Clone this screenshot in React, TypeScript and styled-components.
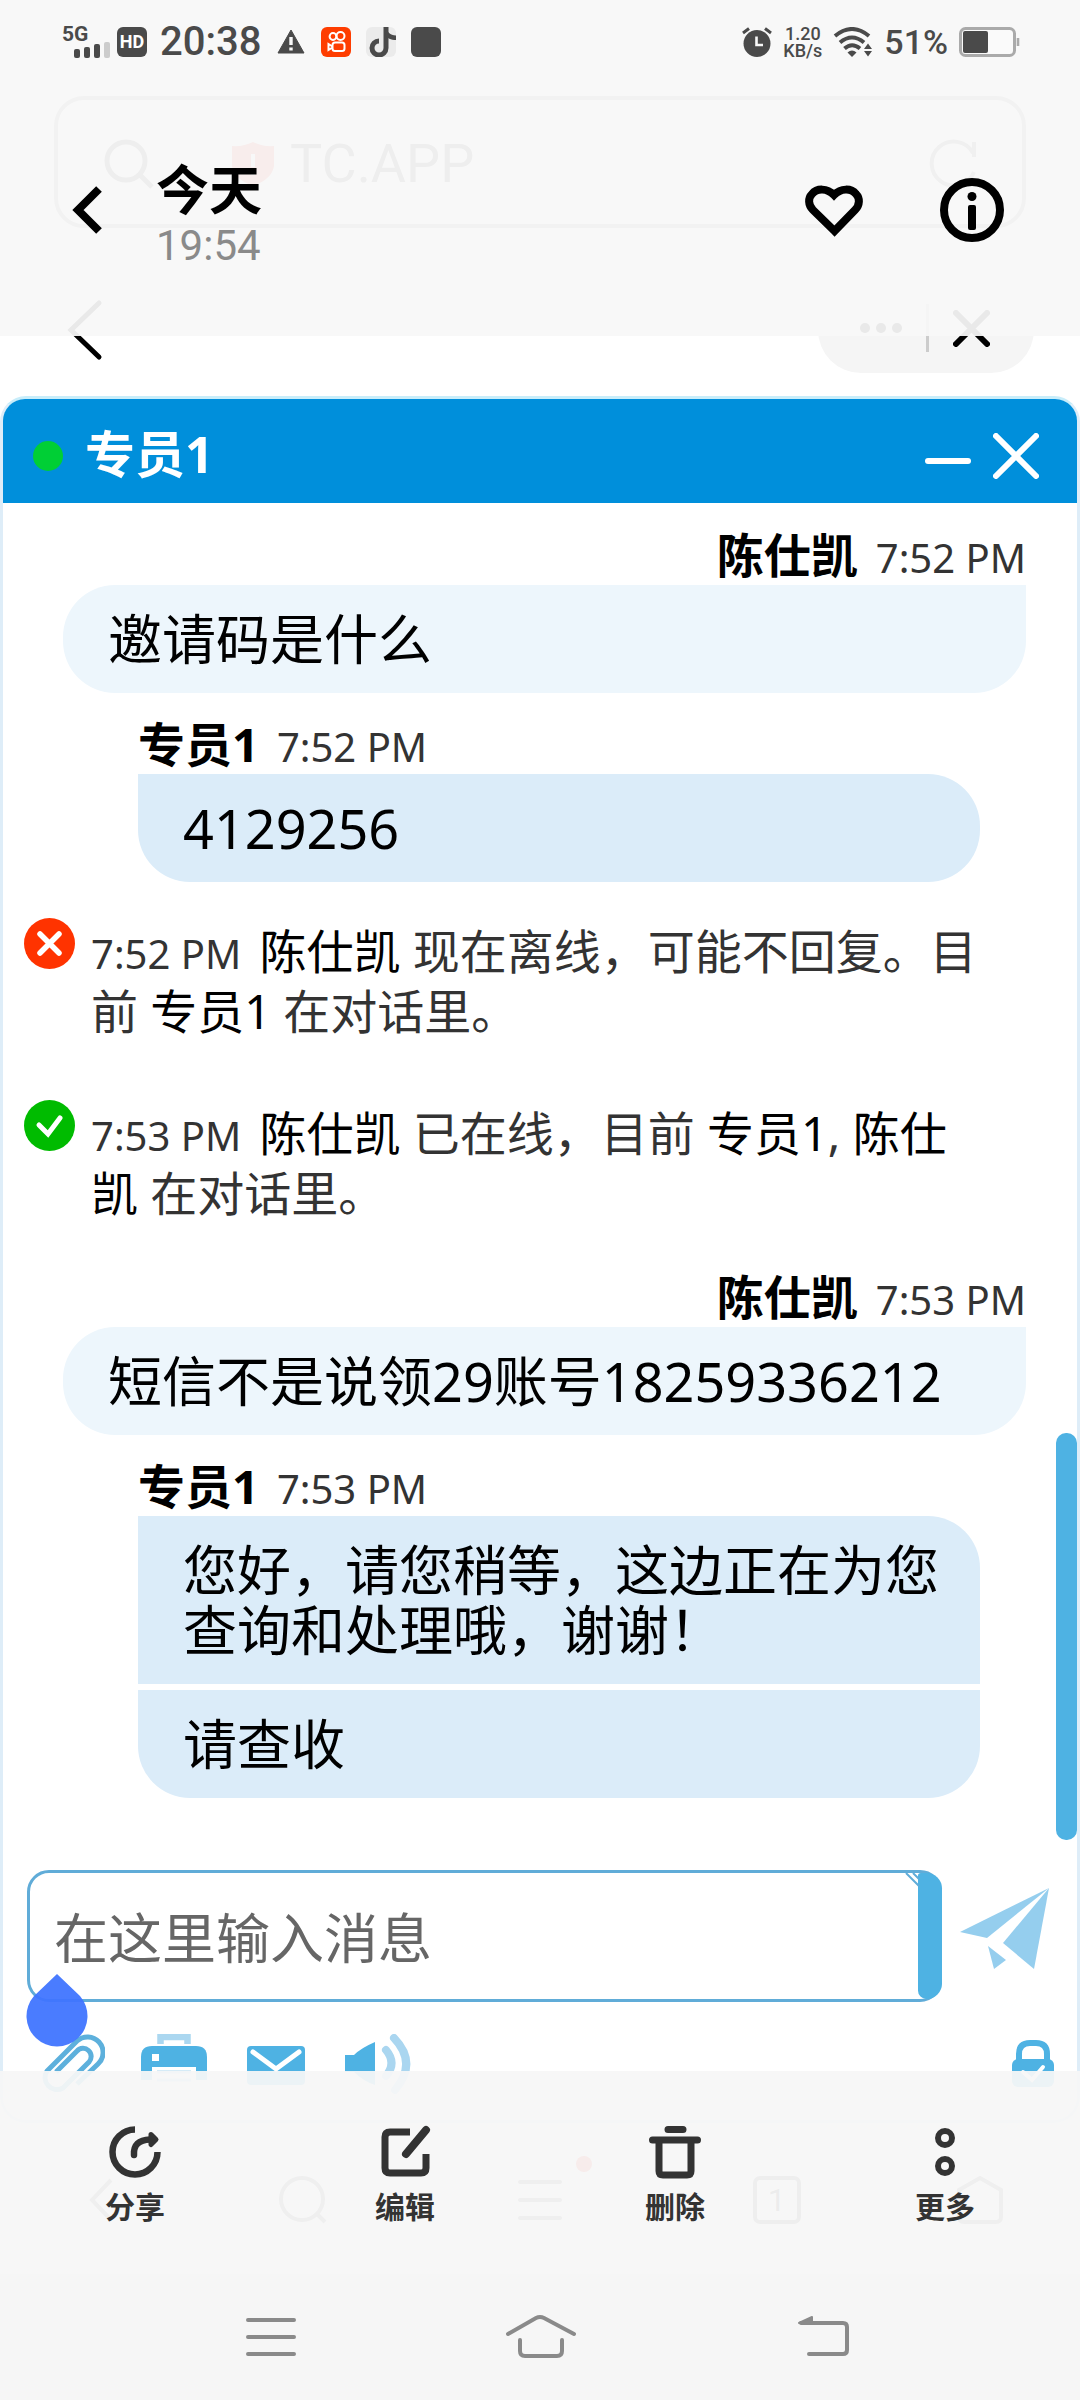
import React from "react";
import styled, { createGlobalStyle, css } from "styled-components";

const SKY = "#4eb2e3";
const INK = "#4a4a4a";
const UI_FONT = `Roboto, "Noto Sans CJK SC", sans-serif`;
const CHAT_FONT = `"Noto Sans", "Noto Sans CJK SC", sans-serif`;

const GlobalStyle = createGlobalStyle`
  *, *::before, *::after { box-sizing: border-box; }
  body { margin: 0; background: #fff; font-family: ${UI_FONT}; }
  button { border: 0; padding: 0; background: none; font: inherit; color: inherit; display: block; cursor: pointer; }
  svg { display: block; }
  p, h1, h2 { margin: 0; }
`;

const Viewer = styled.div`
  position: relative;
  min-height: 100vh;
  overflow: hidden;
`;

/* ---------- photo being viewed ---------- */

const Photo = styled.main`
  display: flex;
  flex-direction: column;
  padding-top: 96px;
`;

const AddressBar = styled.div`
  display: flex;
  align-items: center;
  height: 132px;
  margin: 0 54px;
  padding: 4px 44px 0 46px;
  border: 4px solid #999;
  border-radius: 30px;
  color: #555;
`;

const AddressText = styled.span`
  flex: 1;
  margin-left: 16px;
  font-size: 54px;
  line-height: 60px;
`;

const Shield = styled.svg`
  margin-left: 78px;
`;

const MiniBar = styled.div`
  display: flex;
  align-items: center;
  justify-content: space-between;
  height: 86px;
  margin: 59px 46px 0 64px;
`;

const Capsule = styled.div`
  display: flex;
  align-items: center;
  justify-content: space-between;
  width: 216px;
  height: 86px;
  padding: 0 44px 4px 42px;
  border-radius: 43px;
  background: #f5f5f5;
`;

const CapsuleRule = styled.span`
  width: 3px;
  height: 48px;
  background: #ccc;
`;

const ChatWindow = styled.section`
  margin-top: 23px;
  border: 3px solid #deedf8;
  border-top-color: #c8edfa;
  border-radius: 26px;
  font-family: ${CHAT_FONT};
`;

const ChatHeader = styled.header`
  display: flex;
  align-items: center;
  height: 104px;
  padding: 10px 38px 0 30px;
  border-radius: 22px 22px 0 0;
  background: #008fdb;
  color: #fff;
`;

const OnlineDot = styled.span`
  width: 30px;
  height: 30px;
  margin-right: 22px;
  border-radius: 50%;
  background: #00cf35;
`;

const ChatTitle = styled.h2`
  flex: 1;
  padding-bottom: 4px;
  font-size: 50px;
  line-height: 60px;
  font-weight: 700;
`;

const HeaderButtons = styled.div`
  display: flex;
  gap: 22px;
`;

const Log = styled.div`
  display: flex;
  padding-top: 22px;
`;

const Messages = styled.div`
  flex: 1;
  min-width: 0;
  padding: 0 30px 42px 21px;
`;

const ScrollTrack = styled.div`
  display: flex;
  flex-direction: column;
  justify-content: flex-end;
  width: 21px;
`;

const ScrollThumb = styled.div`
  height: 407px;
  border-radius: 10px;
  background: ${SKY};
`;

const Group = styled.article<{ $mine?: boolean }>`
  display: flex;
  flex-direction: column;
  gap: 6px;
  ${(p) => (p.$mine ? css`margin: 0 0 21px 39px;` : css`margin: 0 46px 0 114px;`)}
`;

const Byline = styled.div<{ $mine?: boolean }>`
  display: flex;
  align-items: baseline;
  justify-content: ${(p) => (p.$mine ? "flex-end" : "flex-start")};
  gap: 18px;
  height: 60px;
  margin-bottom: -6px;
  line-height: 60px;
`;

const Name = styled.strong`
  font-size: 47px;
  font-weight: 700;
  color: #000;
`;

const Time = styled.time`
  font-size: 40px;
  color: #333;
`;

const Bubble = styled.p<{ $mine?: boolean }>`
  padding: 24px 34px 24px 45px;
  font-size: 54px;
  line-height: 60px;
  color: #000;
  background: ${(p) => (p.$mine ? "#edf6fc" : "#dbecf9")};
  ${(p) =>
    p.$mine
      ? css`border-radius: 52px 0 52px 52px;`
      : css`
          &:nth-of-type(1) { border-top-right-radius: 52px; }
          &:last-of-type { border-bottom-left-radius: 52px; border-bottom-right-radius: 52px; }
        `}
`;

const Notice = styled.div<{ $last?: boolean }>`
  display: flex;
  gap: 16px;
  padding-right: 42px;
  margin-bottom: ${(p) => (p.$last ? 44 : 62)}px;
`;

const Notices = styled.div`
  padding-top: 39px;
`;

const NoticeIcon = styled.svg`
  flex: none;
  margin-top: -3px;
`;

const NoticeText = styled.p`
  font-size: 47px;
  line-height: 60px;
  color: #333;
  ${Time} {
    margin-right: 6px;
    line-height: 40px;
  }
`;

const Who = styled.span`
  color: #000;
`;

const Composer = styled.form`
  display: flex;
  align-items: center;
  gap: 18px;
  padding: 30px 27px 0 24px;
`;

const Field = styled.div`
  position: relative;
  display: flex;
  flex: 1;
  height: 132px;
  border: 3px solid #60acd8;
  border-radius: 22px;
`;

const Input = styled.input`
  flex: 1;
  min-width: 0;
  padding: 4px 24px 0;
  border: 0;
  outline: 0;
  background: none;
  font-family: ${CHAT_FONT};
  font-size: 54px;
  &::placeholder { color: #666; opacity: 1; }
`;

const FieldBar = styled.span`
  width: 24px;
  margin-right: -3px;
  border-radius: 4px 22px 22px 12px;
  background: ${SKY};
`;

const Grip = styled.svg`
  position: absolute;
  top: 0;
  right: 20px;
`;

const CursorHandle = styled.svg`
  position: absolute;
  left: -4px;
  top: 101px;
`;

const SendButton = styled.button`
  padding-bottom: 16px;
`;

const Tools = styled.div`
  display: flex;
  gap: 36px;
  padding: 32px 23px 26px 36px;
  & > :last-child { margin-left: auto; }
`;

const BrowserBar = styled.nav`
  display: grid;
  grid-template-columns: 169px 1fr 1fr 1fr 169px;
  justify-items: center;
  align-items: center;
  height: 100px;
  margin-top: 27px;
  padding: 0 16px;
`;

const MenuButton = styled.button`
  position: relative;
`;

const RedDot = styled.span`
  position: absolute;
  top: -24px;
  right: -30px;
  width: 16px;
  height: 16px;
  border-radius: 50%;
  background: #ff4030;
`;

const TabCount = styled.button`
  width: 48px;
  height: 48px;
  border: 4px solid #666;
  border-radius: 7px;
  font-size: 32px;
  line-height: 40px;
  color: #444;
`;

/* ---------- viewer chrome laid over the photo ---------- */

const TopChrome = styled.header`
  position: absolute;
  inset: 0 0 auto;
  height: 336px;
  background: rgba(248, 248, 248, 0.94);
`;

const StatusBar = styled.div`
  display: flex;
  align-items: center;
  justify-content: space-between;
  height: 84px;
  padding: 0 60px 0 62px;
  color: ${INK};
`;

const StatusSide = styled.div<{ $gap: number }>`
  display: flex;
  align-items: center;
  gap: ${(p) => p.$gap}px;
`;

const Signal = styled.div`
  display: flex;
  flex-direction: column;
  width: 48px;
  font-size: 21px;
  line-height: 15px;
  font-weight: 700;
`;

const Bars = styled.div`
  display: flex;
  align-items: flex-end;
  justify-content: flex-end;
  gap: 4px;
`;

const Bar = styled.span<{ $h: number; $dim?: boolean }>`
  width: 6px;
  height: ${(p) => p.$h}px;
  border-radius: 2px;
  background: ${(p) => (p.$dim ? "#ccc" : INK)};
`;

const Badge = styled.span`
  width: 30px;
  height: 30px;
  margin: 0 -2px 0 -8px;
  border-radius: 6px;
  background: ${INK};
  color: #fff;
  font-size: 18px;
  line-height: 30px;
  font-weight: 700;
  text-align: center;
`;

const Clock = styled.span`
  font-size: 40px;
  line-height: 44px;
  font-weight: 500;
`;

const Speed = styled.span`
  display: flex;
  flex-direction: column;
  align-items: center;
  font-size: 18px;
  line-height: 17px;
  font-weight: 500;
`;

const Percent = styled.span`
  font-size: 34px;
  line-height: 40px;
  font-weight: 500;
`;

const TitleBar = styled.div`
  display: flex;
  align-items: center;
  height: 252px;
  padding: 0 76px 0 72px;
`;

const TitleText = styled.div`
  flex: 1;
  margin-left: 54px;
  padding-top: 12px;
`;

const Title = styled.h1`
  font-size: 53px;
  line-height: 60px;
  font-weight: 700;
  color: #000;
`;

const Subtitle = styled.p`
  font-size: 42px;
  line-height: 48px;
  color: #8a8a8a;
`;

const TitleActions = styled.div`
  display: flex;
  gap: 74px;
`;

const BottomChrome = styled.footer`
  position: absolute;
  inset: auto 0 0;
`;

const ActionBar = styled.div`
  display: grid;
  grid-template-columns: repeat(4, 1fr);
  justify-items: center;
  align-items: start;
  height: 203px;
  padding-top: 54px;
  background: rgba(247, 247, 247, 0.94);
`;

const Action = styled.button`
  display: flex;
  flex-direction: column;
  align-items: center;
  gap: 9px;
  font-size: 30px;
  line-height: 40px;
  font-weight: 700;
  color: #333;
`;

const SystemNav = styled.nav`
  display: grid;
  grid-template-columns: repeat(3, 1fr);
  justify-items: center;
  align-items: center;
  height: 126px;
  padding: 0 135px;
  background: #f6f6f6;
`;

function StatusIcons() {
  return (
    <StatusBar>
      <StatusSide $gap={15}>
        <Signal>
          <span>5G</span>
          <Bars>
            <Bar $h={9} />
            <Bar $h={11} />
            <Bar $h={14} />
            <Bar $h={16} $dim />
          </Bars>
        </Signal>
        <Badge>HD</Badge>
        <Clock>20:38</Clock>
        <svg width="30" height="30" viewBox="0 0 30 30">
          <path d="M15 3 L28 26 H2 Z" fill={INK} stroke={INK} strokeWidth="1" strokeLinejoin="round" />
          <path d="M15 10 V18 M15 20.5 V23.5" stroke="#f8f8f8" strokeWidth="3.4" />
        </svg>
        <svg width="30" height="30" viewBox="0 0 30 30">
          <rect width="30" height="30" rx="6" fill="#fe3d00" />
          <g fill="none" stroke="#fff" strokeWidth="2">
            <circle cx="12" cy="9.5" r="3.4" />
            <circle cx="19.5" cy="9" r="4" />
            <rect x="11.5" y="15.5" width="12" height="8.5" rx="2.5" />
            <path d="M11.5 19.5 L7.5 17 V23 L11.5 20.5" />
          </g>
        </svg>
        <svg width="30" height="30" viewBox="0 0 30 30">
          <rect width="30" height="30" rx="6" fill="#ebebeb" />
          <path d="M20 0 V21 A7 7 0 1 1 13 14" fill="none" stroke={INK} strokeWidth="5" />
          <path d="M20 0 C21 5 24 8 30 8.5 V13 C25 13 21 11 19 8 Z" fill={INK} />
        </svg>
        <svg width="30" height="30" viewBox="0 0 30 30">
          <rect width="30" height="30" rx="6" fill={INK} />
        </svg>
      </StatusSide>
      <StatusSide $gap={11}>
        <svg width="30" height="30" viewBox="0 0 30 30">
          <circle cx="15" cy="16.5" r="13.5" fill={INK} />
          <path d="M1 6 L7 1.5 M29 6 L23 1.5" stroke={INK} strokeWidth="3" />
          <path d="M14.5 9.5 V18 H21" fill="none" stroke="#f8f8f8" strokeWidth="2.6" />
        </svg>
        <Speed>
          <span>1.20</span>
          <span>KB/s</span>
        </Speed>
        <svg width="40" height="30" viewBox="0 0 40 30">
          <g fill="none" stroke={INK} strokeWidth="4">
            <path d="M2 9 Q19 -5 36 9" />
            <path d="M7 15.5 Q19 5.5 31 15.5" />
            <path d="M11.5 21.5 Q19 15 27 21.5" />
          </g>
          <path d="M14.5 25.5 Q19 21.5 23.5 25.5 L19 30 Z" fill={INK} />
          <path d="M31 22 L35 16.5 L39 22 Z M31 24 L35 29.5 L39 24 Z" fill={INK} />
        </svg>
        <Percent>51%</Percent>
        <svg width="61" height="30" viewBox="0 0 61 30">
          <rect x="1.5" y="1.5" width="54" height="27" rx="5" fill="#fafafa" stroke="#aaa" strokeWidth="3" />
          <rect x="4" y="4" width="25" height="22" rx="2" fill={INK} />
          <path d="M59 11 V19" stroke="#aaa" strokeWidth="2.6" />
        </svg>
      </StatusSide>
    </StatusBar>
  );
}

function Cross({ size, width, color }: { size: number; width: number; color: string }) {
  const a = width / 2;
  const b = size - a;
  return (
    <svg width={size} height={size} viewBox={`0 0 ${size} ${size}`}>
      <path d={`M${a} ${a} L${b} ${b} M${b} ${a} L${a} ${b}`} stroke={color} strokeWidth={width} strokeLinecap="round" />
    </svg>
  );
}

function ChatTools() {
  return (
    <Tools>
      <button type="button" aria-label="附件">
        <svg width="66" height="60" viewBox="0 0 66 60" fill="none" stroke="#5db0dc" strokeWidth="5">
          <path d="M38 50 L59 30 A15.5 15.5 0 0 0 38 7 L8 37 A12 12 0 0 0 24 54 L50 28 A8 8 0 0 0 38 17 L17 38" />
        </svg>
      </button>
      <button type="button" aria-label="打印">
        <svg width="66" height="60" viewBox="0 0 66 60">
          <path d="M19.5 10 V3 H46.5 V10" fill="none" stroke="#abd7f0" strokeWidth="6.5" />
          <path d="M0 46 V23 Q0 12 11 12 H55 Q66 12 66 23 V46 Z" fill={SKY} />
          <rect x="11" y="20" width="7" height="7" fill="#fff" />
          <rect x="11" y="33" width="44" height="24" fill="#fff" />
          <path d="M16 38 H50 M16 46 H50" stroke="#abd7f0" strokeWidth="3" />
        </svg>
      </button>
      <button type="button" aria-label="邮件">
        <svg width="66" height="60" viewBox="0 0 66 60">
          <rect x="4" y="12" width="58" height="39" rx="4" fill={SKY} />
          <path d="M10 18 L33 35 L56 18" fill="none" stroke="#fff" strokeWidth="5" strokeLinecap="round" />
        </svg>
      </button>
      <button type="button" aria-label="声音">
        <svg width="66" height="60" viewBox="0 0 66 60">
          <path d="M0 21 H9 Q16 14 30 8 V51 Q18 47 9 38 H0 Z" fill={SKY} />
          <g fill="none" stroke="#aad6f0" strokeWidth="8" strokeLinecap="round">
            <path d="M41 16 Q52 29 41 42" />
            <path d="M49 4 Q73 29 50 56" />
          </g>
        </svg>
      </button>
      <button type="button" aria-label="安全">
        <svg width="42" height="60" viewBox="0 0 42 60">
          <path d="M7 26 V20 Q7 9 18 9 H24 Q35 9 35 20 V26" fill="none" stroke={SKY} strokeWidth="6" />
          <rect x="0" y="25" width="42" height="28" rx="6" fill={SKY} />
          <path d="M11 38 L20 46 L31 33" fill="none" stroke="#fff" strokeWidth="4" strokeLinecap="round" />
        </svg>
      </button>
    </Tools>
  );
}

export default function App() {
  return (
    <>
      <GlobalStyle />
      <Viewer>
        <Photo>
          <AddressBar>
            <svg width="50" height="50" viewBox="0 0 50 50" fill="none" stroke="#555" strokeWidth="5">
              <circle cx="22" cy="22" r="19" />
              <path d="M36 36 L48 48" />
            </svg>
            <Shield width="42" height="44" viewBox="0 0 42 44">
              <path d="M21 0 Q31 5 42 4 V24 Q40 37 21 44 Q2 37 0 24 V4 Q11 5 21 0 Z" fill="#ff4030" />
              <path d="M21 12 V25 M21 29 V33" stroke="#fff" strokeWidth="4" />
            </Shield>
            <AddressText>TC.APP</AddressText>
            <svg width="50" height="50" viewBox="0 0 50 50" fill="none" stroke="#777" strokeWidth="4">
              <path d="M46 33 A22 22 0 1 1 45 14 M46 3 V18" />
            </svg>
          </AddressBar>
          <MiniBar>
            <button type="button" aria-label="返回">
              <svg width="42" height="62" viewBox="0 0 42 62" fill="none" stroke="#000" strokeWidth="5" strokeLinecap="round">
                <path d="M35 4 L7 31 L35 58" />
              </svg>
            </button>
            <Capsule>
              <svg width="42" height="10" viewBox="0 0 42 10">
                <circle cx="5" cy="5" r="5" />
                <circle cx="21" cy="5" r="5" />
                <circle cx="37" cy="5" r="5" />
              </svg>
              <CapsuleRule />
              <Cross size={37} width={6} color="#000" />
            </Capsule>
          </MiniBar>

          <ChatWindow>
            <ChatHeader>
              <OnlineDot />
              <ChatTitle>专员1</ChatTitle>
              <HeaderButtons>
                <button type="button" aria-label="最小化">
                  <svg width="46" height="46" viewBox="0 0 46 46">
                    <path d="M3 28 H43" stroke="#fff" strokeWidth="6" strokeLinecap="round" />
                  </svg>
                </button>
                <button type="button" aria-label="关闭">
                  <Cross size={46} width={6} color="#fff" />
                </button>
              </HeaderButtons>
            </ChatHeader>

            <Log>
              <Messages>
                <Group $mine>
                  <Byline $mine>
                    <Name>陈仕凯</Name>
                    <Time>7:52 PM</Time>
                  </Byline>
                  <Bubble $mine>邀请码是什么</Bubble>
                </Group>
                <Group>
                  <Byline>
                    <Name>专员1</Name>
                    <Time>7:52 PM</Time>
                  </Byline>
                  <Bubble>4129256</Bubble>
                </Group>

                <Notices>
                  <Notice>
                    <NoticeIcon width="51" height="51" viewBox="0 0 51 51">
                      <circle cx="25.5" cy="25.5" r="25.5" fill="#ff3300" />
                      <path d="M16 16 L35 35 M35 16 L16 35" stroke="#fff" strokeWidth="5.5" strokeLinecap="round" />
                    </NoticeIcon>
                    <NoticeText>
                      <Time>7:52 PM</Time> <Who>陈仕凯</Who> 现在离线，可能不回复。目前 <Who>专员1</Who> 在对话里。
                    </NoticeText>
                  </Notice>
                  <Notice $last>
                    <NoticeIcon width="51" height="51" viewBox="0 0 51 51">
                      <circle cx="25.5" cy="25.5" r="25.5" fill="#00bb00" />
                      <path d="M15 25 L24 34 L36 18" fill="none" stroke="#fff" strokeWidth="5" strokeLinecap="round" />
                    </NoticeIcon>
                    <NoticeText>
                      <Time>7:53 PM</Time> <Who>陈仕凯</Who> 已在线，目前 <Who>专员1</Who>, <Who>陈仕凯</Who> 在对话里。
                    </NoticeText>
                  </Notice>
                </Notices>

                <Group $mine>
                  <Byline $mine>
                    <Name>陈仕凯</Name>
                    <Time>7:53 PM</Time>
                  </Byline>
                  <Bubble $mine>短信不是说领29账号18259336212</Bubble>
                </Group>
                <Group>
                  <Byline>
                    <Name>专员1</Name>
                    <Time>7:53 PM</Time>
                  </Byline>
                  <Bubble>您好，请您稍等，这边正在为您查询和处理哦，谢谢！</Bubble>
                  <Bubble>请查收</Bubble>
                </Group>
              </Messages>
              <ScrollTrack>
                <ScrollThumb />
              </ScrollTrack>
            </Log>

            <Composer onSubmit={(e) => e.preventDefault()}>
              <Field>
                <Input type="text" aria-label="消息" placeholder="在这里输入消息" />
                <FieldBar />
                <Grip width="14" height="14" viewBox="0 0 14 14" fill="none" stroke="#60acd8" strokeWidth="2">
                  <path d="M1 0 L14 13 M8 0 L14 6" />
                </Grip>
                <CursorHandle width="62" height="73" viewBox="0 0 62 73">
                  <path d="M31 0 L54 22 A30.5 30.5 0 1 1 8 22 Z" fill="#3f74ff" fillOpacity="0.94" />
                </CursorHandle>
              </Field>
              <SendButton type="submit" aria-label="发送">
                <svg width="90" height="81" viewBox="0 0 90 81" fill="#95ceee">
                  <path d="M89 0 L0 44 L27 50 Z" />
                  <path d="M89 0 L43 55 L74 81 Z" />
                  <path d="M28 58 L46 72 L34 81 Z" />
                </svg>
              </SendButton>
            </Composer>
            <ChatTools />
          </ChatWindow>

          <BrowserBar>
            <button type="button" aria-label="后退">
              <svg width="24" height="44" viewBox="0 0 24 44" fill="none" stroke="#777" strokeWidth="4">
                <path d="M22 2 L3 22 L22 42" />
              </svg>
            </button>
            <button type="button" aria-label="搜索">
              <svg width="48" height="48" viewBox="0 0 48 48" fill="none" stroke="#777" strokeWidth="4">
                <circle cx="23" cy="23" r="21" />
                <path d="M38 38 L46 46" />
              </svg>
            </button>
            <MenuButton type="button" aria-label="菜单">
              <svg width="44" height="40" viewBox="0 0 44 40" stroke="#777" strokeWidth="4" strokeLinecap="round">
                <path d="M2 2 H42 M2 20 H42 M2 38 H42" />
              </svg>
              <RedDot />
            </MenuButton>
            <TabCount type="button">1</TabCount>
            <button type="button" aria-label="主页">
              <svg width="46" height="50" viewBox="0 0 46 50" fill="none" stroke="#777" strokeWidth="4">
                <path d="M23 3 L44 15 V42 Q44 47 39 47 H7 Q2 47 2 42 V15 Z" />
              </svg>
            </button>
          </BrowserBar>
        </Photo>

        <TopChrome>
          <StatusIcons />
          <TitleBar>
            <button type="button" aria-label="返回">
              <svg width="30" height="48" viewBox="0 0 30 48" fill="none" stroke="#000" strokeWidth="8">
                <path d="M27 3 L6 24 L27 45" />
              </svg>
            </button>
            <TitleText>
              <Title>今天</Title>
              <Subtitle>19:54</Subtitle>
            </TitleText>
            <TitleActions>
              <button type="button" aria-label="收藏">
                <svg width="64" height="64" viewBox="0 0 64 64" fill="none" stroke="#000" strokeWidth="8">
                  <path d="M32.5 53 L11 32 C6 27 6 20 10 16 C15 10 25 10 32 17 C39 10 49 10 54 16 C58 20 58 27 53 32 Z" />
                </svg>
              </button>
              <button type="button" aria-label="信息">
                <svg width="64" height="64" viewBox="0 0 64 64">
                  <circle cx="32" cy="32" r="28" fill="none" stroke="#000" strokeWidth="8" />
                  <circle cx="32" cy="18.5" r="4.5" />
                  <rect x="28" y="27" width="8" height="25" rx="2" />
                </svg>
              </button>
            </TitleActions>
          </TitleBar>
        </TopChrome>

        <BottomChrome>
          <ActionBar>
            <Action type="button">
              <svg width="54" height="54" viewBox="0 0 54 54" fill="none" stroke="#333" strokeWidth="6.5">
                <path d="M27 4.5 A22.5 22.5 0 1 0 49.5 27" />
                <path d="M26 30 Q25 15 42 14.5" strokeLinecap="round" />
                <path d="M43 9.5 L48 14.5 L43 19.5 Z" strokeWidth="5" strokeLinejoin="round" />
              </svg>
              分享
            </Action>
            <Action type="button">
              <svg width="54" height="54" viewBox="0 0 54 54" fill="none" stroke="#333" strokeWidth="7">
                <path d="M32 7 H12 Q7 7 7 12 V43 Q7 48 12 48 H43 Q48 48 48 43 V29" />
                <path d="M48 5 L28 29" strokeWidth="8" strokeLinecap="round" />
              </svg>
              编辑
            </Action>
            <Action type="button">
              <svg width="54" height="54" viewBox="0 0 54 54" fill="none" stroke="#333" strokeWidth="7">
                <path d="M20 4.5 H35 M4.5 15 H49.5" strokeLinecap="round" />
                <path d="M11 15 V46 Q11 50 15 50 H39 Q43 50 43 46 V15" />
              </svg>
              删除
            </Action>
            <Action type="button">
              <svg width="54" height="54" viewBox="0 0 54 54" fill="none" stroke="#333" strokeWidth="6">
                <circle cx="27" cy="13" r="7" />
                <circle cx="27" cy="41" r="7" />
              </svg>
              更多
            </Action>
          </ActionBar>
          <SystemNav>
            <button type="button" aria-label="最近任务">
              <svg width="80" height="48" viewBox="0 0 80 48" stroke="#8a8a8a" strokeWidth="4" strokeLinecap="round">
                <path d="M18 7 H64 M18 24 H64 M18 41 H64" />
              </svg>
            </button>
            <button type="button" aria-label="主屏幕">
              <svg width="80" height="48" viewBox="0 0 80 48" fill="none" stroke="#8a8a8a" strokeWidth="4" strokeLinecap="round">
                <path d="M8 21 L36 5 Q40 3 44 5 L74 21" />
                <path d="M20 27 V38 Q20 43 25 43 H57 Q62 43 62 38 V27" />
              </svg>
            </button>
            <button type="button" aria-label="系统返回">
              <svg width="80" height="48" viewBox="0 0 80 48" fill="none" stroke="#8a8a8a" strokeWidth="4" strokeLinecap="round">
                <path d="M31 10 H73 Q77 10 77 14 V37 Q77 41 73 41 H39" />
                <path d="M29 10 L42 4 V10 Z" fill="#8a8a8a" strokeWidth="2" strokeLinejoin="round" />
              </svg>
            </button>
          </SystemNav>
        </BottomChrome>
      </Viewer>
    </>
  );
}
